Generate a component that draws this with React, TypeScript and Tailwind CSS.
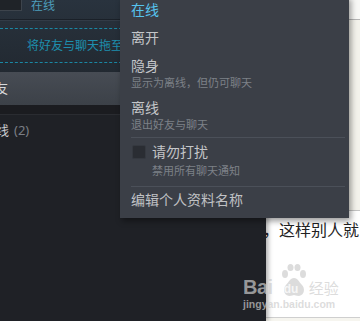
const font = "font-['Noto_Sans','Noto_Sans_CJK_SC',sans-serif]";

function MenuItem({
  label,
  sub,
  active,
}: {
  label: string;
  sub?: string;
  active?: boolean;
}) {
  return (
    <div className="py-[4px] px-[11px]">
      <div
        className={`text-[14px] leading-[20px] ${
          active ? "text-[#56c3ee]" : "text-[#c4c6c9]"
        }`}
      >
        {label}
      </div>
      {sub && (
        <div className="text-[11px] leading-[14px] text-[#7d8188]">{sub}</div>
      )}
    </div>
  );
}

function Separator() {
  return <div className="h-px ml-[11px] mr-[4px] bg-[#4b5059]" />;
}

export default function App() {
  return (
    <div
      className={`relative w-[360px] h-[321px] overflow-hidden flex bg-[#1f2126] ${font}`}
    >
      {/* left app panel */}
      <div className="relative z-10 w-[266px] shrink-0 flex flex-col bg-[#1f2126] shadow-[2px_0_5px_rgba(0,0,0,0.35)]">
        <div className="bg-gradient-to-b from-[#29333e] to-[#222931]">
          <div className="h-[19px] flex items-start">
            <div className="w-[22px] h-[11px] bg-[#1f2328] border-r border-b border-[#3d444c]" />
            <span className="ml-[9px] -mt-[1px] text-[12px] leading-[14px] text-[#4d9dbb]">
              在线
            </span>
          </div>
          <div className="h-px bg-[#1a2028] border-b border-[#323b46] box-content" />
          <div className="pt-[7px] pb-[9px]">
            <div className="h-[35px] border-y border-dashed border-[#1a87a3] flex items-center pl-[27px] text-[12px] text-[#1d8fae] whitespace-nowrap">
              将好友与聊天拖至此处
            </div>
          </div>
        </div>
        <div className="h-[33px] flex items-center bg-gradient-to-b from-[#474c54] to-[#3c4148]">
          <span className="-ml-[5px] text-[13px] text-[#d8d9db]">友</span>
        </div>
        <div className="h-[9px] bg-[#1b1c20] border-b border-[#2a2c31] box-content" />
        <div className="pt-[5px] flex items-center text-[13px] leading-[20px]">
          <span className="-ml-[4px] text-[#c8cacd]">线</span>
          <span className="ml-[5px] text-[#7a7e85]">(2)</span>
        </div>
      </div>

      {/* web page behind */}
      <div className="relative flex-1 flex flex-col overflow-hidden bg-white">
        <div className="h-[19px] bg-[#f8f8f6] border-b border-[#b5b5b5] box-content" />
        <div className="h-[190px] bg-[#f3f2eb] border-b border-[#c4c4c4] box-content" />
        <div className="h-[99px] bg-white border-b border-[#cfcfcf] box-content pt-[7px]">
          <div className="-ml-[3px] text-[16px] leading-[22px] text-[#222] whitespace-nowrap font-['Noto_Sans_CJK_SC',sans-serif]">
            ，这样别人就
          </div>
        </div>
        <div className="flex-1 bg-[#f6f5ef]" />
      </div>

      {/* status menu */}
      <div className="absolute z-20 left-[120px] top-[-4px] w-[229px] bg-[#3b3f47] shadow-[2px_3px_6px_rgba(0,0,0,0.4)]">
        <MenuItem label="在线" active />
        <MenuItem label="离开" />
        <MenuItem label="隐身" sub="显示为离线，但仍可聊天" />
        <MenuItem label="离线" sub="退出好友与聊天" />
        <div className="h-px" />
        <Separator />
        <div className="pt-[4px] pb-[8px] px-[11px]">
          <div className="flex items-center h-[20px]">
            <div className="w-[14px] h-[14px] ml-px rounded-[2px] bg-[#2a2d33] border border-[#353940]" />
            <span className="ml-[6px] text-[14px] leading-[20px] text-[#c4c6c9]">
              请勿打扰
            </span>
          </div>
          <div className="mt-[2px] ml-[21px] text-[11px] leading-[14px] text-[#7d8188]">
            禁用所有聊天通知
          </div>
        </div>
        <Separator />
        <div className="pt-[3px] pb-[8px] px-[11px] text-[14px] leading-[20px] text-[#c0c2c5]">
          编辑个人资料名称
        </div>
      </div>

      {/* baidu jingyan watermark */}
      <div className="absolute z-30 left-[243px] top-[264px] text-[rgba(205,205,205,0.7)]">
        <div className="flex items-end">
          <span className="text-[20px] leading-[20px] font-bold font-['Liberation_Sans',sans-serif] tracking-[-0.5px]">
            Bai
          </span>
          <div className="relative ml-[8px] w-[26px] h-[33px]">
            <svg width="26" height="33" viewBox="0 0 26 33" className="absolute inset-0">
              <ellipse cx="4" cy="10" rx="3" ry="4" fill="currentColor" />
              <ellipse cx="9.5" cy="3.5" rx="3" ry="3.5" fill="currentColor" />
              <ellipse cx="16.5" cy="3.5" rx="3" ry="3.5" fill="currentColor" />
              <ellipse cx="22" cy="10" rx="3" ry="4" fill="currentColor" />
              <path
                d="M13 14 C9 14 8 18 5 21 C2 24 2 31 8 32 C11 32 12 31 13 31 C14 31 15 32 18 32 C24 31 24 24 21 21 C18 18 17 14 13 14 Z"
                fill="currentColor"
              />
            </svg>
            <span className="absolute left-[3px] bottom-[2px] text-[12px] leading-[12px] font-bold text-[rgba(255,255,255,0.75)] font-['Liberation_Sans',sans-serif]">
              du
            </span>
          </div>
          <span className="ml-[2px] mb-[1px] text-[15px] leading-[16px] font-['Noto_Sans_CJK_SC',sans-serif]">
            经验
          </span>
        </div>
        <div className="mt-[1px] text-[10.5px] leading-[12px] font-bold font-['Liberation_Sans',sans-serif]">
          jingyan.baidu.com
        </div>
      </div>
    </div>
  );
}
